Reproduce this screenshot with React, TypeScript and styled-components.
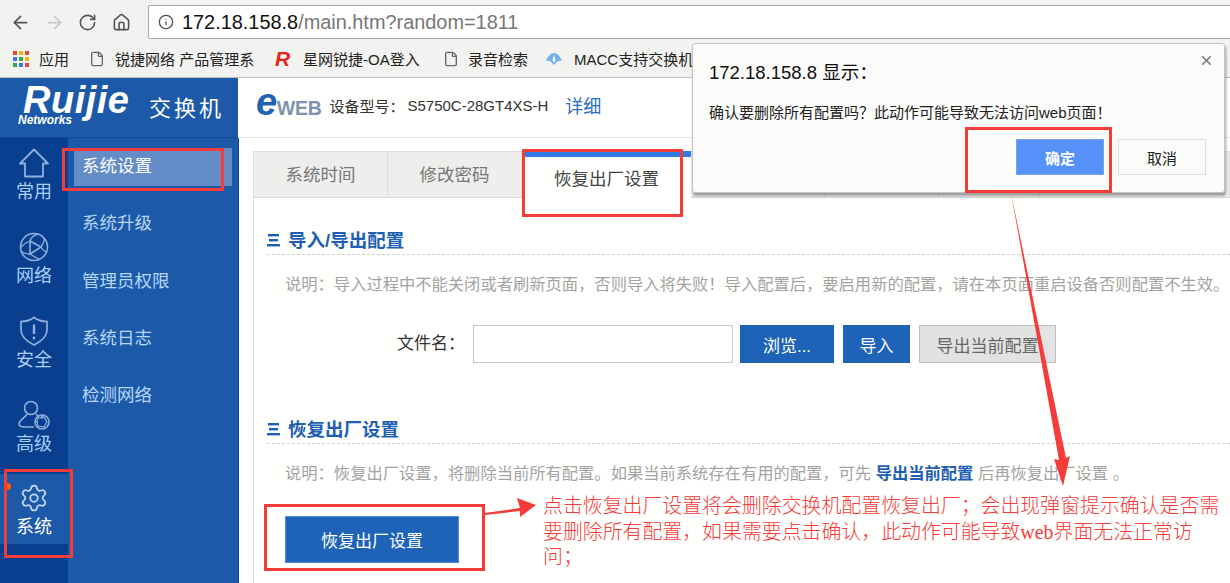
import React from "react"
import styled, { createGlobalStyle } from "styled-components"
import { ArrowLeft, ArrowRight, RotateCw, Home, Info, File, Settings, X } from "lucide-react"

const GlobalStyle = createGlobalStyle`
    html, body {
        margin: 0;
        padding: 0;
        background: #fffffd;
    }
    body {
        font-family: "Liberation Sans", "Noto Sans CJK SC", sans-serif;
        overflow: hidden;
    }
`

const Page = styled.div`
    position: relative;
    width: 1230px;
    height: 583px;
    overflow: hidden;
    display: flex;
    flex-direction: column;
`

const Toolbar = styled.div`
    height: 40px;
    box-sizing: border-box;
    background: #f2f2f0;
    display: flex;
    align-items: center;
    padding: 4px 0 0 10px;
    color: #555;
`

const NavIcon = styled.span<{ $muted?: boolean }>`
    width: 34px;
    display: flex;
    align-items: center;
    color: ${({ $muted }) => ($muted ? "#c9c9c9" : "#555")};
`

const UrlBox = styled.div`
    margin-left: 2px;
    flex: 1;
    height: 34px;
    box-sizing: border-box;
    background: #fff;
    border: 1px solid #a9a9a9;
    border-right: none;
    border-radius: 2px 0 0 2px;
    display: flex;
    align-items: center;
    gap: 8px;
    padding-left: 9px;
    font-size: 19.9px;
    color: #777;
`

const UrlHost = styled.span`
    color: #111;
`

const Bookmarks = styled.div`
    height: 38px;
    box-sizing: border-box;
    background: #f2f2f0;
    border-bottom: 1px solid #bdbdbb;
    display: flex;
    align-items: center;
    padding-left: 13px;
    font-size: 15px;
    color: #222;
    white-space: nowrap;
`

const Bookmark = styled.span<{ $width: number; $gap?: number }>`
    width: ${({ $width }) => $width}px;
    flex: none;
    display: flex;
    align-items: center;
    gap: ${({ $gap }) => $gap ?? 10}px;
`

const AppsGrid = styled.span`
    display: grid;
    grid-template-columns: repeat(3, 4px);
    grid-auto-rows: 4px;
    gap: 2px;
`

const AppsDot = styled.i<{ $color: string }>`
    background: ${({ $color }) => $color};
`

const RedR = styled.span`
    font: italic 900 21px "Liberation Sans", sans-serif;
    color: #e8251c;
    width: 20px;
`

const Shell = styled.div`
    flex: 1;
    display: flex;
    min-height: 0;
`

const Side = styled.aside`
    width: 239px;
    flex: none;
    display: flex;
    flex-direction: column;
`

const LogoBar = styled.div`
    height: 60px;
    width: 238px;
    flex: none;
    box-sizing: border-box;
    background: #1c5aa9;
    border-bottom: 1px solid #0d4a98;
    display: flex;
    align-items: center;
    padding: 0 0 4px 18px;
    color: #fff;
`

const LogoMark = styled.div`
    width: 131px;
    display: flex;
    flex-direction: column;
    line-height: 1;
`

const LogoWord = styled.span`
    font: italic 900 38px/29px "Liberation Sans", sans-serif;
    letter-spacing: 0.5px;
    padding-left: 5px;
`

const LogoSub = styled.span`
    font: italic 700 12px/10px "Liberation Sans", sans-serif;
`

const LogoTitle = styled.span`
    font-size: 22px;
    letter-spacing: 3px;
    white-space: nowrap;
`

const SideBody = styled.div`
    flex: 1;
    display: flex;
    min-height: 0;
    background: #1c5aa9;
`

const Rail = styled.nav`
    width: 68px;
    flex: none;
    background: #0a3f8f;
    padding-top: 8px;
    height: 100%;
`

const RailItem = styled.div<{ $active?: boolean }>`
    position: relative;
    height: ${({ $active }) => ($active ? 70 : 84)}px;
    box-sizing: border-box;
    display: flex;
    flex-direction: column;
    align-items: center;
    padding-top: ${({ $active }) => ($active ? 9 : 2)}px;
    margin-top: ${({ $active }) => ($active ? "-8px" : "0")};
    background: ${({ $active }) => ($active ? "#1c5aa9" : "transparent")};
    color: ${({ $active }) => ($active ? "#fff" : "#a9d0f7")};
    font-size: 18px;
    line-height: 24px;
    svg {
        color: ${({ $active }) => ($active ? "#c3d6ee" : "#8fb0dc")};
        display: block;
        margin-bottom: 2px;
    }
`

const ActiveDot = styled.i`
    position: absolute;
    left: 4px;
    top: 9px;
    width: 7px;
    height: 7px;
    border-radius: 50%;
    background: #ff5a00;
`

const SubMenu = styled.ul`
    flex: 1;
    list-style: none;
    margin: 0;
    padding: 10px 6px 0;
    border-right: 1px solid #0d4a98;
`

const SubItem = styled.li<{ $active?: boolean }>`
    height: 38px;
    margin-bottom: 19.3px;
    padding-left: 8px;
    font-size: 17.5px;
    line-height: 36px;
    color: ${({ $active }) => ($active ? "#fff" : "#b7d5f6")};
    background: ${({ $active }) => ($active ? "#648cc6" : "transparent")};
`

const Main = styled.main`
    flex: 1;
    min-width: 0;
    display: flex;
    flex-direction: column;
`

const MainHeader = styled.div`
    height: 60px;
    flex: none;
    box-sizing: border-box;
    border-bottom: 1px solid #e4e4e4;
    display: flex;
    align-items: center;
    padding: 0 0 5px 17px;
    font-size: 15px;
    color: #333;
`

const EwebMark = styled.span`
    font-size: 19.5px;
    color: #7e93ad;
    font-weight: 700;
    letter-spacing: -0.3px;
    margin-right: 8px;
    display: flex;
    align-items: baseline;
`

const EwebE = styled.b`
    font: italic 900 38px/24px "Liberation Sans", sans-serif;
    color: #1f62b4;
`

const ModelValue = styled.span`
    margin-left: 3px;
`

const DetailLink = styled.span`
    margin-left: 17px;
    font-size: 18px;
    color: #2a6fc2;
`

const Content = styled.div`
    flex: 1;
    min-height: 0;
    margin: 13px 0 0 14px;
    border-left: 1px solid #dcdcdc;
    display: flex;
    flex-direction: column;
`

const Tabs = styled.div`
    height: 47px;
    flex: none;
    display: flex;
`

const Tab = styled.div<{ $active?: boolean; $width: number }>`
    width: ${({ $width }) => $width}px;
    flex: none;
    box-sizing: border-box;
    display: flex;
    align-items: center;
    justify-content: center;
    font-size: 17.5px;
    border: 1px solid #dcdcdc;
    border-left: none;
    ${({ $active }) =>
        $active
            ? `
        background: #fffffd;
        border: none;
        border-top: 6px solid #2f7ae5;
        color: #444;
    `
            : `
        background: #eeeeec;
        color: #777;
        padding-bottom: 3px;
    `}
`

const Body = styled.div`
    flex: 1;
    padding: 0 0 0 13px;
    min-height: 0;
`

const SectionHead = styled.div<{ $top: number }>`
    margin-top: ${({ $top }) => $top}px;
    height: 32px;
    box-sizing: border-box;
    border-bottom: 1px dashed #cfcfcf;
    display: flex;
    align-items: center;
    gap: 8px;
    font-size: 18.5px;
    font-weight: 700;
    color: #1e5fb4;
`

const Note = styled.p`
    margin: 0;
    padding: 17px 0 0 18px;
    font-size: 16.3px;
    line-height: 24px;
    color: #a3a3a3;
    white-space: nowrap;
`

const NoteLink = styled.b`
    color: #1e5fb4;
`

const FileRow = styled.div`
    margin-top: 29px;
    display: flex;
    align-items: center;
    padding-left: 130px;
    height: 38px;
`

const FileLabel = styled.span`
    width: 76px;
    flex: none;
    font-size: 17px;
    color: #333;
    padding-bottom: 5px;
`

const FileInput = styled.div`
    width: 260px;
    height: 38px;
    box-sizing: border-box;
    background: #fff;
    border: 1px solid #c8c8c8;
    margin-right: 7px;
`

const Action = styled.button<{ $width: number; $ghost?: boolean }>`
    width: ${({ $width }) => $width}px;
    height: 38px;
    box-sizing: border-box;
    padding: 0;
    margin-right: 9px;
    font: 17px "Liberation Sans", "Noto Sans CJK SC", sans-serif;
    border: 1px solid ${({ $ghost }) => ($ghost ? "#c0c0c0" : "#1e63b8")};
    background: ${({ $ghost }) => ($ghost ? "#e2e2e2" : "#1e63b8")};
    color: ${({ $ghost }) => ($ghost ? "#666" : "#fff")};
`

const ResetButton = styled.button`
    display: block;
    margin: 31px 0 0 18px;
    width: 174px;
    height: 47px;
    padding: 0;
    border: 1px solid #4d8fe0;
    background: #1e63b8;
    color: #fff;
    font: 17px "Liberation Sans", "Noto Sans CJK SC", sans-serif;
`

/* things that lie over the page */
const Dialog = styled.div`
    position: absolute;
    left: 692px;
    top: 43px;
    width: 533px;
    height: 150px;
    box-sizing: border-box;
    background: #fbfbf9;
    border: 1px solid #c4c4c4;
    border-radius: 3px;
    box-shadow: 1px 3px 3px rgba(0, 0, 0, 0.35);
    padding: 17px 18px 0 16px;
    display: flex;
    flex-direction: column;
`

const DialogClose = styled.span`
    position: absolute;
    right: 10px;
    top: 9px;
    color: #777;
    display: flex;
`

const DialogTitle = styled.div`
    font-size: 18.5px;
    line-height: 24px;
    color: #111;
`

const DialogText = styled.div`
    margin-top: 17px;
    font-size: 15px;
    line-height: 22px;
    color: #222;
`

const DialogActions = styled.div`
    margin-top: 15px;
    display: flex;
    justify-content: flex-end;
    gap: 14px;
`

const DialogBtn = styled.button<{ $primary?: boolean }>`
    width: 88px;
    height: 36px;
    padding: 0;
    box-sizing: border-box;
    font: ${({ $primary }) => ($primary ? 700 : 400)} 15px "Liberation Sans", "Noto Sans CJK SC", sans-serif;
    border: 1px solid ${({ $primary }) => ($primary ? "#7ba3e0" : "#dcdcdc")};
    background: ${({ $primary }) => ($primary ? "#5691f9" : "#fbfbf9")};
    color: ${({ $primary }) => ($primary ? "#fff" : "#222")};
`

const Mark = styled.div<{ $x: number; $y: number; $w: number; $h: number }>`
    position: absolute;
    left: ${({ $x }) => $x}px;
    top: ${({ $y }) => $y}px;
    width: ${({ $w }) => $w}px;
    height: ${({ $h }) => $h}px;
    box-sizing: border-box;
    border: 3px solid #f63b3b;
    pointer-events: none;
`

const ArrowLayer = styled.svg`
    position: absolute;
    left: 0;
    top: 0;
    pointer-events: none;
`

const Callout = styled.div`
    position: absolute;
    left: 543px;
    top: 494px;
    width: 680px;
    font: 300 19.9px/25.5px "Liberation Serif", "Noto Sans CJK SC", serif;
    color: #f63b3b;
`

const HeadMark = () => (
    <svg width="13" height="14" viewBox="0 0 13 14" fill="#1e5fb4" style={{ flex: "none", marginTop: 2 }}>
        <rect x="1" y="1" width="11" height="2.4" />
        <rect x="2" y="6" width="9" height="2.4" />
        <rect x="0" y="11" width="13" height="2.4" />
    </svg>
)

const HomeIcon = () => (
    <svg width="32" height="30" viewBox="0 0 32 30" fill="none" stroke="currentColor" strokeWidth="1.8" strokeLinejoin="round">
        <path d="M16 1.500L30 15.500H25V28.500H7V15.500H2Z" />
    </svg>
)

const NetIcon = () => (
    <svg width="30" height="30" viewBox="0 0 30 30" fill="none" stroke="currentColor" strokeWidth="1.6">
        <circle cx="15" cy="15" r="13.500" />
        <path d="M11 9L22 15L11 22Z" />
        <path d="M11 9C12 6 15 3 19 2M22 15C24 12 26 9 25 6M22 15C24 18 26 20 28 20M11 22C14 24 17 26 20 27M11 22C8 22 5 21 3 20M11 9C8 10 5 12 2 15" strokeWidth="1.300" />
    </svg>
)

const ShieldIcon = () => (
    <svg width="30" height="30" viewBox="0 0 30 30" fill="none" stroke="currentColor" strokeWidth="1.700">
        <path d="M15 1.500C19 4.500 23 5.500 28 5.500V14C28 21 22 25.500 15 29C8 25.500 2 21 2 14V5.500C7 5.500 11 4.500 15 1.500Z" />
        <path d="M15 8.500V18" strokeWidth="2.400" />
        <circle cx="15" cy="22" r="1.400" fill="currentColor" stroke="none" />
    </svg>
)

const AdminIcon = () => (
    <svg width="34" height="30" viewBox="0 0 34 30" fill="none" stroke="currentColor" strokeWidth="1.600">
        <circle cx="14" cy="8" r="6.500" />
        <path d="M10 14c-1 3-8 6-8 10 0 3 3 3 6 3h9M19 14c1 1 2 2 3 3" />
        <circle cx="25" cy="22" r="7" />
        <path d="M21 18l6-1 3 5-3 5-6-1-1-5zM25 15v4M18 22h3" strokeWidth="1.200" />
    </svg>
)

const MaccIcon = () => (
    <svg width="18" height="14" viewBox="0 0 18 14" style={{ flex: "none" }}>
        <path d="M1 9c2-5 5-8 8-8s6 3 8 8c-3-1-5 0-8 4-3-4-5-5-8-4z" fill="#6fb2ea" />
        <path d="M9 3l1.500 5-1.500 3-1.500-3z" fill="#fff" />
    </svg>
)

const appsColors = ["#e8453c", "#f4b400", "#e8453c", "#3b78e7", "#34a853", "#f4b400", "#34a853", "#3b78e7", "#e8453c"]
const subItems = ["系统设置", "系统升级", "管理员权限", "系统日志", "检测网络"]

export default function App() {
    return (
        <Page>
            <GlobalStyle />
            <Toolbar>
                <NavIcon><ArrowLeft size={21} strokeWidth={2} /></NavIcon>
                <NavIcon $muted><ArrowRight size={21} strokeWidth={2} /></NavIcon>
                <NavIcon><RotateCw size={19} strokeWidth={2} /></NavIcon>
                <NavIcon><Home size={19} strokeWidth={2} /></NavIcon>
                <UrlBox>
                    <Info size={16} color="#555" />
                    <span><UrlHost>172.18.158.8</UrlHost>/main.htm?random=1811</span>
                </UrlBox>
            </Toolbar>
            <Bookmarks>
                <Bookmark $width={76}>
                    <AppsGrid>
                        {appsColors.map((c, i) => <AppsDot key={i} $color={c} />)}
                    </AppsGrid>
                    应用
                </Bookmark>
                <Bookmark $width={186}><File size={16} color="#666" style={{ flex: "none" }} />锐捷网络 产品管理系</Bookmark>
                <Bookmark $width={168} $gap={8}><RedR>R</RedR>星网锐捷-OA登入</Bookmark>
                <Bookmark $width={102} $gap={9}><File size={16} color="#666" style={{ flex: "none" }} />录音检索</Bookmark>
                <Bookmark $width={118} $gap={11}><MaccIcon />MACC支持交换机</Bookmark>
            </Bookmarks>
            <Shell>
                <Side>
                    <LogoBar>
                        <LogoMark>
                            <LogoWord>Ruijie</LogoWord>
                            <LogoSub>Networks</LogoSub>
                        </LogoMark>
                        <LogoTitle>交换机</LogoTitle>
                    </LogoBar>
                    <SideBody>
                        <Rail>
                            <RailItem><HomeIcon />常用</RailItem>
                            <RailItem><NetIcon />网络</RailItem>
                            <RailItem><ShieldIcon />安全</RailItem>
                            <RailItem><AdminIcon />高级</RailItem>
                            <RailItem $active><ActiveDot /><Settings size={30} strokeWidth={1.4} />系统</RailItem>
                        </Rail>
                        <SubMenu>
                            {subItems.map((item, i) => (
                                <SubItem key={item} $active={i === 0}>{item}</SubItem>
                            ))}
                        </SubMenu>
                    </SideBody>
                </Side>
                <Main>
                    <MainHeader>
                        <EwebMark><EwebE>e</EwebE>WEB</EwebMark>
                        设备型号：
                        <ModelValue>S5750C-28GT4XS-H</ModelValue>
                        <DetailLink>详细</DetailLink>
                    </MainHeader>
                    <Content>
                        <Tabs>
                            <Tab $width={134}>系统时间</Tab>
                            <Tab $width={134}>修改密码</Tab>
                            <Tab $width={169} $active>恢复出厂设置</Tab>
                            <Tab $width={134} />
                            <Tab $width={114} />
                            <Tab $width={101} />
                            <Tab $width={190} />
                        </Tabs>
                        <Body>
                            <SectionHead $top={25}><HeadMark />导入/导出配置</SectionHead>
                            <Note>说明：导入过程中不能关闭或者刷新页面，否则导入将失败！导入配置后，要启用新的配置，请在本页面重启设备否则配置不生效。</Note>
                            <FileRow>
                                <FileLabel>文件名：</FileLabel>
                                <FileInput />
                                <Action $width={94}>浏览...</Action>
                                <Action $width={67}>导入</Action>
                                <Action $width={137} $ghost>导出当前配置</Action>
                            </FileRow>
                            <SectionHead $top={49}><HeadMark />恢复出厂设置</SectionHead>
                            <Note>说明：恢复出厂设置，将删除当前所有配置。如果当前系统存在有用的配置，可先 <NoteLink>导出当前配置</NoteLink> 后再恢复出厂设置 。</Note>
                            <ResetButton>恢复出厂设置</ResetButton>
                        </Body>
                    </Content>
                </Main>
            </Shell>

            <Dialog>
                <DialogClose><X size={15} strokeWidth={2.4} /></DialogClose>
                <DialogTitle>172.18.158.8 显示：</DialogTitle>
                <DialogText>确认要删除所有配置吗？此动作可能导致无法访问web页面！</DialogText>
                <DialogActions>
                    <DialogBtn $primary>确定</DialogBtn>
                    <DialogBtn>取消</DialogBtn>
                </DialogActions>
            </Dialog>

            <Mark $x={62} $y={148} $w={162} $h={43} />
            <Mark $x={522} $y={149} $w={161} $h={68} />
            <Mark $x={965} $y={127} $w={147} $h={66} />
            <Mark $x={4} $y={469} $w={69} $h={89} />
            <Mark $x={264} $y={504} $w={221} $h={67} />

            <ArrowLayer width="1230" height="583" viewBox="0 0 1230 583">
                <path d="M1011 193L1066 458L1070 456L1063 486L1054 459L1059 460Z" fill="#f63b3b" />
                <path d="M485 513L520 508L517 498L536 505L520 517L520 511L485 515Z" fill="#f63b3b" />
            </ArrowLayer>

            <Callout>点击恢复出厂设置将会删除交换机配置恢复出厂；会出现弹窗提示确认是否需要删除所有配置，如果需要点击确认，此动作可能导致web界面无法正常访问；</Callout>
        </Page>
    )
}
